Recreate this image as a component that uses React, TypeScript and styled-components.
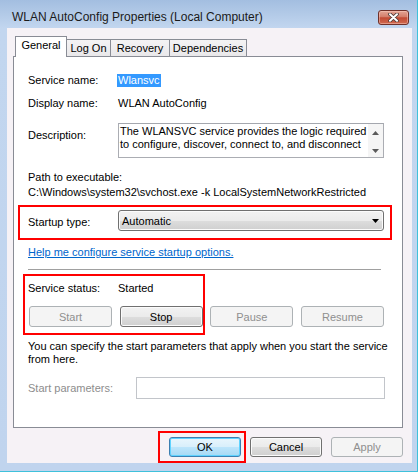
import React from "react";
import styled, { createGlobalStyle } from "styled-components";

const GlobalStyle = createGlobalStyle`
  html, body {
    margin: 0;
    padding: 0;
    background: #c0d4ee;
  }
  body {
    font-family: "Liberation Sans", Arial, sans-serif;
    font-size: 11px;
    color: #000;
  }
`;

const Window = styled.div`
  position: relative;
  width: 418px;
  height: 472px;
  box-sizing: border-box;
  display: flex;
  flex-direction: column;
  background: linear-gradient(to bottom, #a3bee0 0px, #c2d6ef 28px, #c0d4ee 100%);
  border-right: 1px solid #3fc1db;
  border-bottom: 1px solid #3fc1db;
`;

const TitleBar = styled.div`
  height: 28px;
  box-sizing: border-box;
  padding: 6px 8px 0 12px;
  display: flex;
  align-items: center;
  justify-content: space-between;
`;

const Title = styled.span`
  font-size: 12px;
  line-height: 15px;
  color: #1a1a1a;
`;

const CloseButton = styled.div`
  width: 31px;
  height: 15px;
  box-sizing: border-box;
  border: 1px solid #6f3029;
  border-radius: 3px;
  background: linear-gradient(to bottom, #e3a595 0%, #d47d6a 45%, #c24a34 52%, #cf6a50 100%);
  box-shadow: inset 0 0 0 1px rgba(255, 210, 200, 0.45);
  display: flex;
  align-items: center;
  justify-content: center;
`;

const Client = styled.div`
  height: 435px;
  margin: 0 5px 0 7px;
  box-sizing: border-box;
  padding: 8px 9px 0 6px;
  background: #f6f2f6;
  display: flex;
  flex-direction: column;
`;

const TabStrip = styled.div`
  display: flex;
  align-items: flex-end;
  height: 20px;
  padding-left: 2px;
`;

const Tab = styled.div<{ $active?: boolean; $w: number }>`
  position: relative;
  z-index: ${(p) => (p.$active ? 1 : 0)};
  width: ${(p) => p.$w}px;
  height: ${(p) => (p.$active ? 21 : 17)}px;
  margin-bottom: ${(p) => (p.$active ? -1 : 0)}px;
  box-sizing: border-box;
  border: 1px solid #898c95;
  border-bottom: none;
  background: ${(p) => (p.$active ? "#fff" : "linear-gradient(to bottom, #f4f3f4, #e9e8ea)")};
  padding-top: 2px;
  line-height: 13px;
  text-align: center;
  & + & {
    margin-left: -1px;
  }
`;

const Panel = styled.div`
  height: 372px;
  box-sizing: border-box;
  border: 1px solid #898c95;
  background: #fff;
  padding-left: 14px;
  display: flex;
  flex-direction: column;
`;

const Row = styled.div<{ $top: number; $align?: string }>`
  display: flex;
  align-items: ${(p) => p.$align || "center"};
  margin-top: ${(p) => p.$top}px;
  line-height: 14px;
`;

const Label = styled.div<{ $w?: number; $pad?: number; $muted?: boolean }>`
  width: ${(p) => p.$w || 90}px;
  flex-shrink: 0;
  padding-top: ${(p) => p.$pad || 0}px;
  color: ${(p) => (p.$muted ? "#8d8d8d" : "#000")};
`;

const Selected = styled.span`
  display: inline-block;
  margin-left: -1px;
  padding: 0 1px;
  line-height: 13px;
  background: #3399ff;
  color: #fff;
`;

const TextBox = styled.div`
  width: 266px;
  height: 35px;
  box-sizing: border-box;
  border: 1px solid #abadb3;
  border-top-color: #a4a7ae;
  display: flex;
`;

const TextBoxBody = styled.div`
  flex: 1;
  padding: 1px 0 0 1px;
  line-height: 13px;
  white-space: nowrap;
  overflow: hidden;
`;

const ScrollBar = styled.div`
  width: 15px;
  background: #f5f5f5;
  display: flex;
  flex-direction: column;
  justify-content: space-between;
  align-items: center;
  padding: 7px 0 4px;
`;

const Line = styled.div<{ $top: number }>`
  margin-top: ${(p) => p.$top}px;
  line-height: 14px;
  white-space: nowrap;
`;

const Select = styled.div`
  width: 266px;
  height: 21px;
  box-sizing: border-box;
  border: 1px solid #707070;
  border-radius: 3px;
  background: linear-gradient(to bottom, #f2f2f2 0%, #ebebeb 50%, #dddddd 51%, #cfcfcf 100%);
  box-shadow: inset 0 0 0 1px #fbfbfb;
  padding: 0 4px 0 3px;
  display: flex;
  align-items: center;
  justify-content: space-between;
`;

const Link = styled.a`
  color: #0066cc;
  text-decoration: underline;
  line-height: 14px;
  margin-top: 14px;
  align-self: flex-start;
`;

const Separator = styled.div`
  width: 353px;
  height: 1px;
  margin-top: 10px;
  background: #a0a0a0;
`;

const ButtonRow = styled.div`
  display: flex;
  justify-content: space-between;
  width: 355px;
  margin: 11px 0 0 1px;
`;

const Button = styled.button<{ $kind?: "normal" | "disabled" | "default"; $w: number; $h: number }>`
  width: ${(p) => p.$w}px;
  height: ${(p) => p.$h}px;
  box-sizing: border-box;
  padding: 0;
  font-family: "Liberation Sans", Arial, sans-serif;
  font-size: 11px;
  border-radius: 3px;
  border: 1px solid
    ${(p) => (p.$kind === "disabled" ? "#adb2b5" : p.$kind === "default" ? "#3c7fb1" : "#707070")};
  color: ${(p) => (p.$kind === "disabled" ? "#8f8f8f" : "#000")};
  background: ${(p) =>
    p.$kind === "disabled"
      ? "#f4f4f4"
      : p.$kind === "default"
      ? "linear-gradient(to bottom, #e9f6fd 0%, #d8effb 50%, #bde5fb 51%, #a6d9f4 100%)"
      : "linear-gradient(to bottom, #f2f2f2 0%, #ebebeb 50%, #dddddd 51%, #cfcfcf 100%)"};
  box-shadow: inset 0 0 0 1px
    ${(p) => (p.$kind === "disabled" ? "#f4f4f4" : p.$kind === "default" ? "#5fd3ff" : "#fbfbfb")};
`;

const Paragraph = styled.div`
  margin-top: 13px;
  line-height: 13px;
  white-space: nowrap;
`;

const Input = styled.div`
  width: 249px;
  height: 22px;
  box-sizing: border-box;
  border: 1px solid #c2c5ca;
  background: #fff;
`;

const DialogButtons = styled.div`
  display: flex;
  justify-content: flex-end;
  gap: 9px;
  margin-top: 9px;
`;

const Highlight = styled.div<{ $x: number; $y: number; $w: number; $h: number }>`
  position: absolute;
  left: ${(p) => p.$x}px;
  top: ${(p) => p.$y}px;
  width: ${(p) => p.$w}px;
  height: ${(p) => p.$h}px;
  box-sizing: border-box;
  border: 2px solid #ff0000;
  pointer-events: none;
`;

const CloseIcon = () => (
  <svg width="11" height="9" viewBox="0 0 11 9">
    <path d="M2 1.2 L9 7.8 M9 1.2 L2 7.8" stroke="#4a3a38" strokeWidth="3.6" strokeLinecap="round" />
    <path d="M2 1.2 L9 7.8 M9 1.2 L2 7.8" stroke="#ffffff" strokeWidth="2" strokeLinecap="round" />
  </svg>
);

const Arrow = ({ up, color = "#000" }: { up?: boolean; color?: string }) => (
  <svg width="7" height="4" viewBox="0 0 7 4">
    <path d={up ? "M0 4 L3.5 0 L7 4 Z" : "M0 0 L7 0 L3.5 4 Z"} fill={color} />
  </svg>
);

const tabs = [
  { label: "General", w: 52, active: true },
  { label: "Log On", w: 45 },
  { label: "Recovery", w: 60 },
  { label: "Dependencies", w: 78 },
];

export default function App() {
  return (
    <>
      <GlobalStyle />
      <Window>
        <TitleBar>
          <Title>WLAN AutoConfig Properties (Local Computer)</Title>
          <CloseButton>
            <CloseIcon />
          </CloseButton>
        </TitleBar>
        <Client>
          <TabStrip>
            {tabs.map((t) => (
              <Tab key={t.label} $w={t.w} $active={t.active}>
                {t.label}
              </Tab>
            ))}
          </TabStrip>
          <Panel>
            <Row $top={16}>
              <Label>Service name:</Label>
              <Selected>Wlansvc</Selected>
            </Row>
            <Row $top={9}>
              <Label>Display name:</Label>
              <span>WLAN AutoConfig</span>
            </Row>
            <Row $top={13} $align="flex-start">
              <Label $pad={5}>Description:</Label>
              <TextBox>
                <TextBoxBody>
                  The WLANSVC service provides the logic required
                  <br />
                  to configure, discover, connect to, and disconnect
                </TextBoxBody>
                <ScrollBar>
                  <Arrow up color="#5a5a5a" />
                  <Arrow color="#5a5a5a" />
                </ScrollBar>
              </TextBox>
            </Row>
            <Line $top={12}>Path to executable:</Line>
            <Line $top={1}>C:\Windows\system32\svchost.exe -k LocalSystemNetworkRestricted</Line>
            <Row $top={11}>
              <Label $pad={2}>Startup type:</Label>
              <Select>
                <span>Automatic</span>
                <Arrow />
              </Select>
            </Row>
            <Link href="#">Help me configure service startup options.</Link>
            <Separator />
            <Row $top={11}>
              <Label>Service status:</Label>
              <span>Started</span>
            </Row>
            <ButtonRow>
              <Button $kind="disabled" $w={83} $h={21}>Start</Button>
              <Button $w={83} $h={21}>Stop</Button>
              <Button $kind="disabled" $w={83} $h={21}>Pause</Button>
              <Button $kind="disabled" $w={83} $h={21}>Resume</Button>
            </ButtonRow>
            <Paragraph>
              You can specify the start parameters that apply when you start the service
              <br />
              from here.
            </Paragraph>
            <Row $top={11}>
              <Label $w={108} $muted>Start parameters:</Label>
              <Input />
            </Row>
          </Panel>
          <DialogButtons>
            <Button $kind="default" $w={72} $h={20}>OK</Button>
            <Button $w={72} $h={20}>Cancel</Button>
            <Button $kind="disabled" $w={72} $h={20}>Apply</Button>
          </DialogButtons>
        </Client>
        <Highlight $x={18} $y={205} $w={374} $h={35} />
        <Highlight $x={23} $y={274} $w={182} $h={61} />
        <Highlight $x={158} $y={431} $w={88} $h={32} />
      </Window>
    </>
  );
}
